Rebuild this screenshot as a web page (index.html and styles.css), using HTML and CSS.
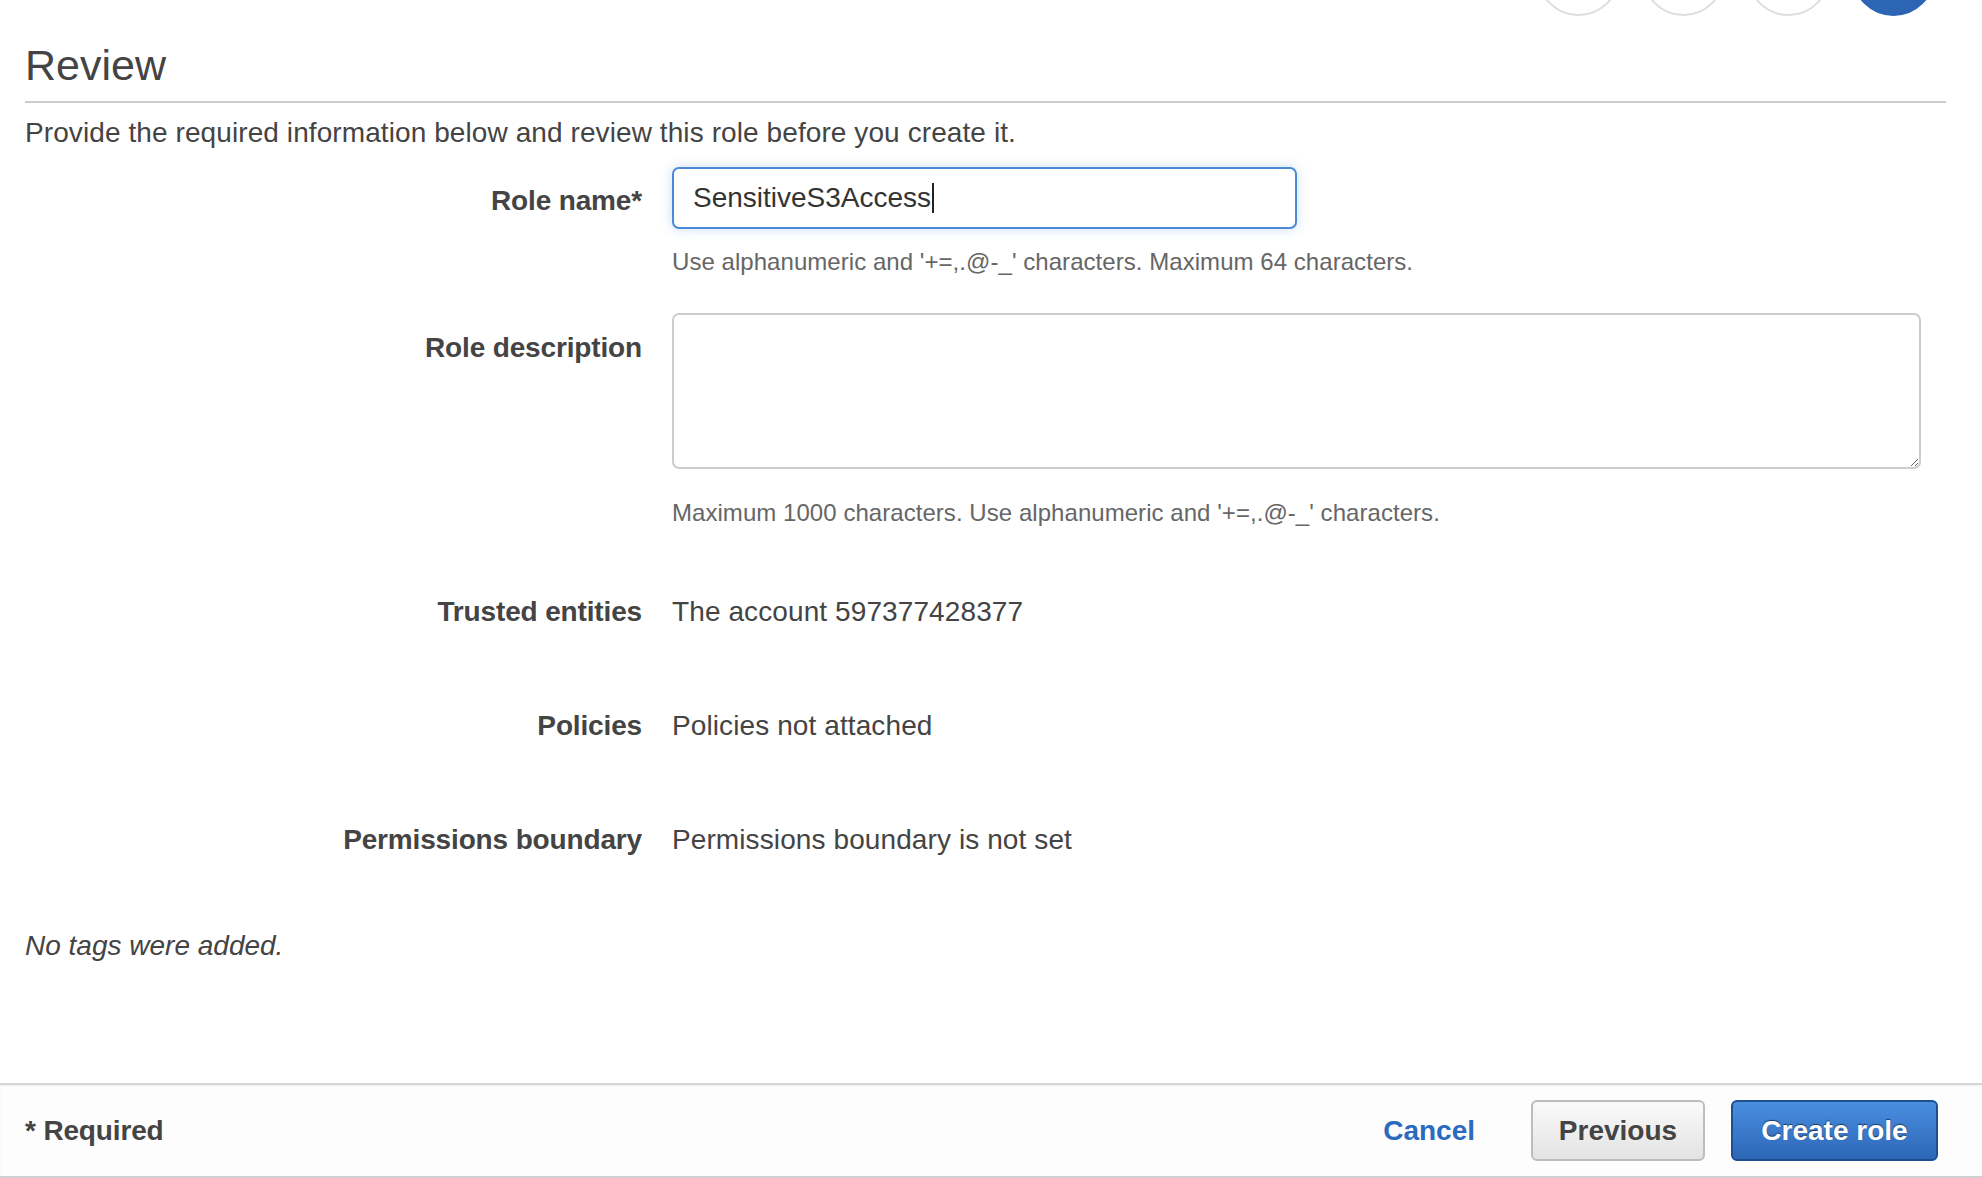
FILE: index.html
```html
<!DOCTYPE html>
<html lang="en">
<head>
<meta charset="utf-8">
<title>Create role - Review</title>
<link rel="stylesheet" href="styles.css">
</head>
<body>
<div class="page">
  <main class="content">
    <div class="steps">
      <span class="step"></span>
      <span class="step"></span>
      <span class="step"></span>
      <span class="step step-active"></span>
    </div>
    <h1 class="title">Review</h1>
    <p class="intro">Provide the required information below and review this role before you create it.</p>

    <div class="row row-name">
      <div class="label label-name">Role name*</div>
      <div class="field">
        <div class="text-input"><span class="text-value">SensitiveS3Access</span><span class="caret"></span></div>
      </div>
    </div>
    <div class="row row-help1">
      <div></div>
      <div class="help">Use alphanumeric and '+=,.@-_' characters. Maximum 64 characters.</div>
    </div>

    <div class="row row-desc">
      <div class="label label-top">Role description</div>
      <div class="field">
        <textarea class="textarea"></textarea>
      </div>
    </div>
    <div class="row row-help2">
      <div></div>
      <div class="help">Maximum 1000 characters. Use alphanumeric and '+=,.@-_' characters.</div>
    </div>

    <div class="row row-read row-trusted">
      <div class="label">Trusted entities</div>
      <div class="value">The account 597377428377</div>
    </div>
    <div class="row row-read">
      <div class="label">Policies</div>
      <div class="value">Policies not attached</div>
    </div>
    <div class="row row-read">
      <div class="label">Permissions boundary</div>
      <div class="value">Permissions boundary is not set</div>
    </div>

    <p class="no-tags">No tags were added.</p>
  </main>

  <footer class="footer">
    <div class="required">* Required</div>
    <div class="actions">
      <a class="cancel" href="#">Cancel</a>
      <button class="btn btn-secondary" type="button">Previous</button>
      <button class="btn btn-primary" type="button">Create role</button>
    </div>
  </footer>
</div>
</body>
</html>
```

FILE: styles.css
```css
* {
  box-sizing: border-box;
}

html, body {
  margin: 0;
  padding: 0;
  height: 100%;
  overflow: hidden;
  background: #ffffff;
}

body {
  font-family: "Liberation Sans", Arial, Helvetica, sans-serif;
  color: #444444;
  font-size: 28px;
  line-height: 32px;
}

.page {
  display: flex;
  flex-direction: column;
  height: 100vh;
}

.content {
  flex: 1;
  padding: 0 36px 0 25px;
}

.steps {
  display: flex;
  justify-content: flex-end;
  align-items: flex-end;
  gap: 22px;
  height: 16px;
  padding-right: 11px;
}

.step {
  flex: none;
  width: 83px;
  height: 83px;
  border-radius: 50%;
  border: 2px solid #dddddd;
  background: #ffffff;
}

.step-active {
  border-color: #2d65b5;
  background: #2d65b5;
}

.title {
  margin: 27px 0 0;
  padding-bottom: 14px;
  font-size: 43px;
  line-height: 44px;
  font-weight: normal;
  color: #444444;
  border-bottom: 2px solid #cccccc;
}

.intro {
  margin: 14px 0 0;
  font-size: 28px;
  line-height: 32px;
  letter-spacing: 0.09px;
}

.row {
  display: grid;
  grid-template-columns: 617px 1249px;
  column-gap: 30px;
}

.label {
  text-align: right;
  font-weight: bold;
  font-size: 28px;
  line-height: 32px;
  letter-spacing: -0.15px;
  color: #444444;
}

.label-name {
  padding-top: 5px;
}

.label-top {
  padding-top: 19px;
}

.row-name {
  margin-top: 18px;
  align-items: center;
}

.text-input {
  display: flex;
  align-items: center;
  width: 625px;
  height: 62px;
  padding: 0 19px;
  border: 2px solid #4a8ad8;
  border-radius: 7px;
  background: #ffffff;
  box-shadow: 0 0 12px rgba(74, 138, 216, 0.28);
  font-size: 28px;
  color: #333333;
}

.caret {
  display: inline-block;
  width: 2px;
  height: 30px;
  margin-left: 1px;
  background: #222222;
}

.help {
  font-size: 24px;
  line-height: 28px;
  letter-spacing: 0.05px;
  color: #666666;
}

.row-help1 {
  margin-top: 19px;
}

.row-desc {
  margin-top: 37px;
}

.textarea {
  display: block;
  width: 1249px;
  height: 156px;
  margin: 0;
  border: 2px solid #cccccc;
  border-radius: 7px;
  background: #ffffff;
  font-family: inherit;
  font-size: 28px;
  resize: vertical;
  outline: none;
}

.row-help2 {
  margin-top: 30px;
}

.value {
  font-size: 28px;
  line-height: 32px;
  letter-spacing: 0.1px;
  color: #444444;
}

.row-read {
  margin-top: 82px;
}

.row-read.row-trusted {
  margin-top: 69px;
}

.no-tags {
  margin: 74px 0 0;
  font-style: italic;
  font-size: 28px;
  line-height: 32px;
}

.footer {
  flex: none;
  height: 95px;
  display: flex;
  align-items: center;
  justify-content: space-between;
  padding: 0 44px 0 25px;
  background: #fdfdfd;
  border-top: 2px solid #d6d6d6;
  border-bottom: 2px solid #d0d0d0;
  box-shadow: inset 0 1px 2px rgba(0, 0, 0, 0.06);
}

.required {
  font-weight: bold;
  font-size: 28px;
  letter-spacing: -0.15px;
  color: #444444;
}

.actions {
  display: flex;
  align-items: center;
}

.cancel {
  font-weight: bold;
  font-size: 28px;
  color: #2a6bbd;
  text-decoration: none;
  margin-right: 56px;
}

.btn {
  height: 61px;
  font-family: inherit;
  font-weight: bold;
  font-size: 28px;
  line-height: 32px;
  border-radius: 6px;
  cursor: pointer;
}

.btn-secondary {
  width: 174px;
  color: #444444;
  border: 2px solid #bdbdbd;
  background: linear-gradient(#fafafa, #e3e3e3);
  margin-right: 26px;
}

.btn-primary {
  width: 207px;
  color: #ffffff;
  border: 2px solid #1e4f91;
  background: linear-gradient(#4a8ee0, #2d67b7);
  text-shadow: 0 -1px 1px rgba(0, 0, 0, 0.55);
}
```
